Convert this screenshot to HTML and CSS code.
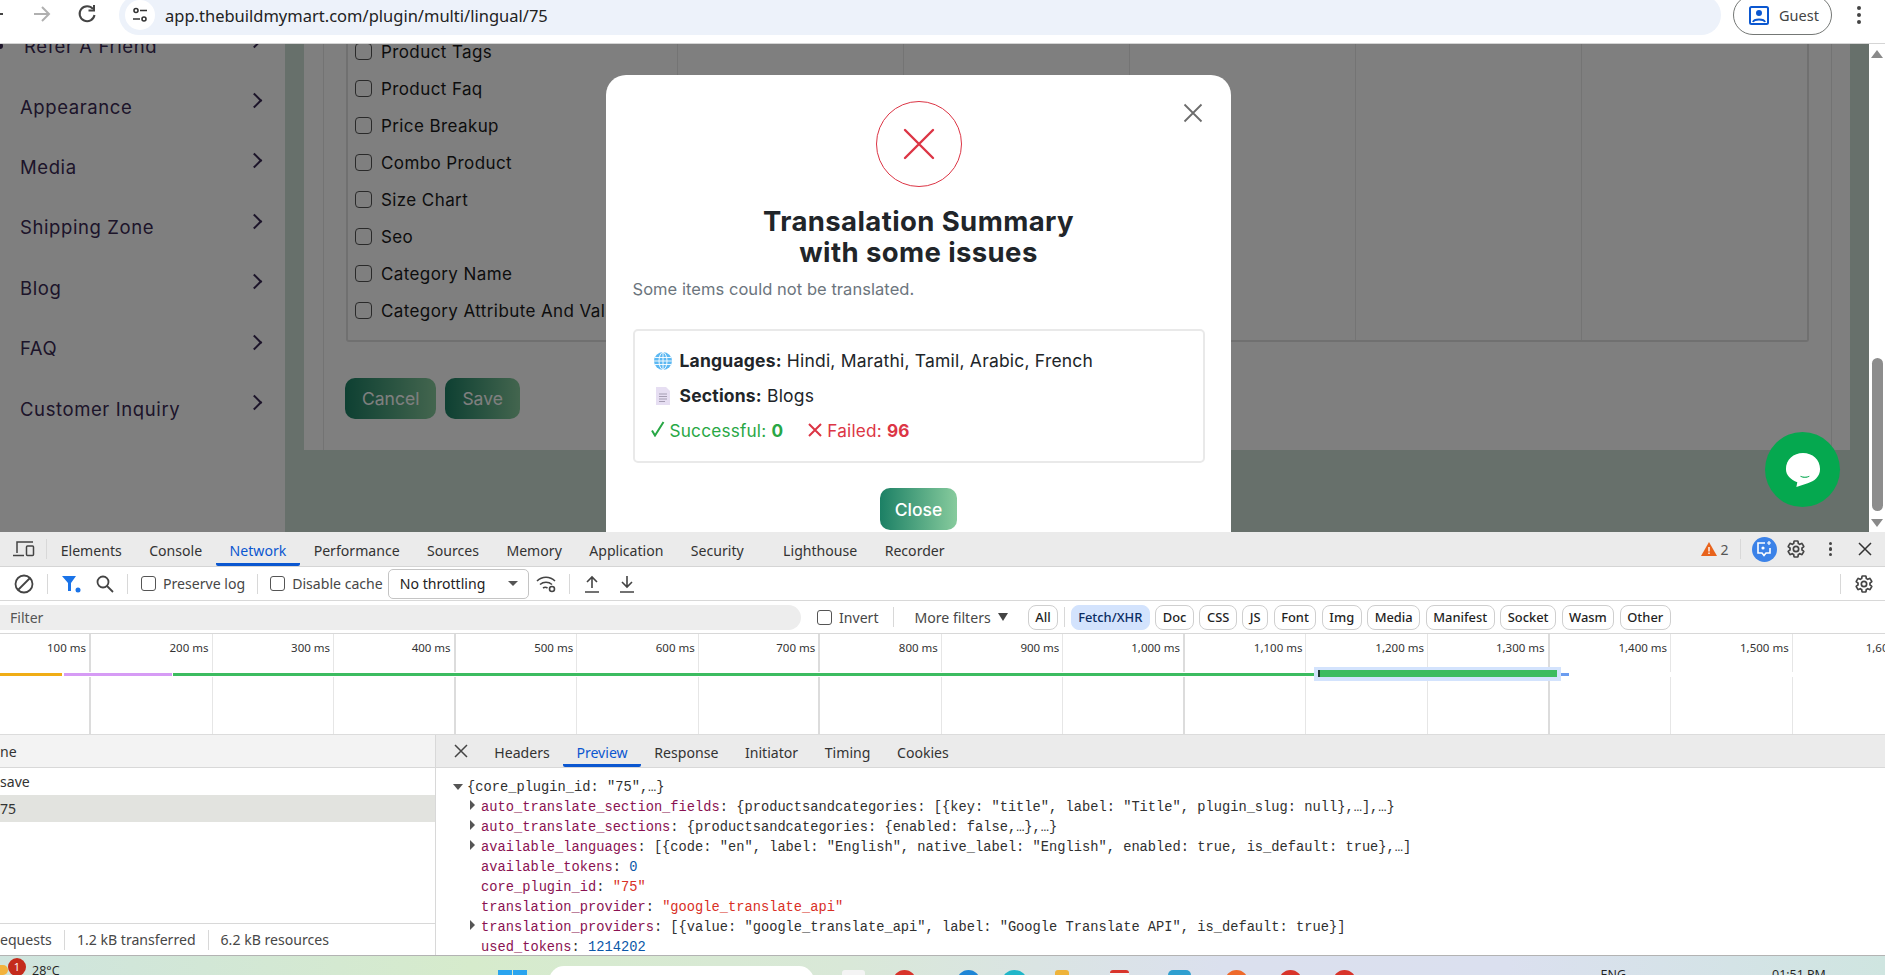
FILE: index.html
```html
<!DOCTYPE html>
<html lang="en">
<head>
  <meta charset="UTF-8">
  <title>Plugin - Multi Lingual</title>
  <link rel="stylesheet" href="styles.css">
</head>
<body>

  <!-- Browser toolbar -->
  <header class="browser-bar">
    <svg class="nav-icons" width="100" height="30" viewBox="0 0 100 30" fill="none" stroke-width="2">
      <path d="M0 14h3" stroke="#444"/>
      <path d="M34 14h14M42 7l7 7-7 7" stroke="#b0b0b0"/>
      <path d="M93 9a7.500 7.500 0 1 0 1.500 6" stroke="#444"/>
      <path d="M94 5v5.500h-5.500" stroke="#444"/>
    </svg>
    <div class="omnibox">
      <span class="site-chip">
        <svg width="18" height="18" viewBox="0 0 18 18" fill="none" stroke="#333" stroke-width="1.600">
          <circle cx="5" cy="4.500" r="2"/><path d="M9 4.500h7M2 13h7"/><circle cx="13" cy="13" r="2"/>
        </svg>
      </span>
      <span class="url">app.thebuildmymart.com/plugin/multi/lingual/75</span>
    </div>
    <div class="guest-pill">
      <svg width="20" height="19" viewBox="0 0 20 19" fill="none" stroke="#0b57d0" stroke-width="2">
        <rect x="1" y="1" width="18" height="17" rx="1.500"/><circle cx="10" cy="7" r="2" fill="#0b57d0"/><path d="M4 16c1-3.500 11-3.500 12 0"/>
      </svg>
      <span>Guest</span>
    </div>
    <div class="kebab kebab-browser"><i></i><i></i><i></i></div>
  </header>

  <!-- Application page behind the dialog -->
  <main class="page">
    <aside class="sidebar">
      <div class="side-item side-item-sub"><span class="side-dot"></span><span>Refer A Friend</span><span class="chevron"></span></div>
      <div class="side-item"><span>Appearance</span><span class="chevron"></span></div>
      <div class="side-item"><span>Media</span><span class="chevron"></span></div>
      <div class="side-item"><span>Shipping Zone</span><span class="chevron"></span></div>
      <div class="side-item"><span>Blog</span><span class="chevron"></span></div>
      <div class="side-item"><span>FAQ</span><span class="chevron"></span></div>
      <div class="side-item"><span>Customer Inquiry</span><span class="chevron"></span></div>
    </aside>

    <section class="content">
      <div class="panel">
        <div class="card">
          <div class="sections-table">
            <div class="table-col col-first">
              <label class="check-row"><span class="check"></span>Product Tags</label>
              <label class="check-row"><span class="check"></span>Product Faq</label>
              <label class="check-row"><span class="check"></span>Price Breakup</label>
              <label class="check-row"><span class="check"></span>Combo Product</label>
              <label class="check-row"><span class="check"></span>Size Chart</label>
              <label class="check-row"><span class="check"></span>Seo</label>
              <label class="check-row"><span class="check"></span>Category Name</label>
              <label class="check-row"><span class="check"></span>Category Attribute And Values</label>
            </div>
            <div class="table-col"></div>
            <div class="table-col"></div>
            <div class="table-col"></div>
            <div class="table-col"></div>
            <div class="table-col col-last"></div>
          </div>
          <div class="form-actions">
            <button class="grad-button">Cancel</button>
            <button class="grad-button">Save</button>
          </div>
        </div>
      </div>
    </section>

    <div class="scrollbar">
      <span class="scroll-arrow scroll-up"></span>
      <span class="scroll-thumb"></span>
      <span class="scroll-arrow scroll-down"></span>
    </div>

    <div class="backdrop"></div>

    <!-- Summary dialog -->
    <div class="modal">
      <svg class="modal-close" width="20" height="20" viewBox="0 0 20 20" stroke="#6c6c6c" stroke-width="1.800">
        <path d="M1.500 1.500l17 17M18.500 1.500l-17 17"/>
      </svg>
      <div class="modal-icon">
        <svg width="32" height="32" viewBox="0 0 32 32" stroke="#dc3545" stroke-width="2.400" stroke-linecap="round">
          <path d="M2 2l28 28M30 2L2 30"/>
        </svg>
      </div>
      <h2 class="modal-title">Transalation Summary<br>with some issues</h2>
      <p class="modal-text">Some items could not be translated.</p>
      <div class="summary-box">
        <div class="summary-row">
          <svg class="summary-icon" width="18" height="18" viewBox="0 0 18 18" fill="none" stroke="#fff" stroke-width=".9">
            <circle cx="9" cy="9" r="9" fill="#5cb8f2" stroke="none"/>
            <ellipse cx="9" cy="9" rx="4" ry="8.500"/><path d="M9 0v18M1 5.500h16M0 9h18M1 12.500h16"/>
          </svg>
          <span><b>Languages:</b> Hindi, Marathi, Tamil, Arabic, French</span>
        </div>
        <div class="summary-row">
          <svg class="summary-icon" width="18" height="18" viewBox="0 0 18 18" fill="none" stroke="#9d95aa" stroke-width=".9">
            <path d="M2 0h10l4 4v14H2z" fill="#e6def2" stroke="none"/>
            <path d="M5 7h8M5 9.500h8M5 12h8M5 14.500h6"/>
          </svg>
          <span><b>Sections:</b> Blogs</span>
        </div>
        <div class="summary-row stats-row">
          <span class="stat stat-ok"><svg width="14" height="16" viewBox="0 0 14 16" fill="none" stroke="#28a745" stroke-width="2"><path d="M1 9.500l3 5L12.500 1"/></svg> Successful: <b>0</b></span>
          <span class="stat stat-bad"><svg width="14" height="14" viewBox="0 0 14 14" fill="none" stroke="#dc3545" stroke-width="2"><path d="M1 1l12 12M13 1L1 13"/></svg> Failed: <b>96</b></span>
        </div>
      </div>
      <button class="grad-button close-button">Close</button>
    </div>

    <div class="chat-fab">
      <svg width="36" height="36" viewBox="0 0 38 38">
        <path d="M19 1c10 0 18 7 18 17 0 8-6 13-13 15l-12 4 1-5C6 29 1 25 1 18 1 8 9 1 19 1z" fill="#fff"/>
        <path d="M16 25c3 1.500 7 1.500 10 0-.5 3-9.500 3-10 0z" fill="#05a84f"/>
      </svg>
    </div>
  </main>

  <!-- DevTools -->
  <section class="devtools">
    <div class="dt-tabs">
      <svg class="dt-device" width="22" height="18" viewBox="0 0 22 18" fill="none" stroke="#444" stroke-width="1.500">
        <path d="M4 13V2h16M0 15.500h11"/><rect x="13.500" y="6" width="7" height="9.500" rx="1"/>
      </svg>
      <span class="dt-sep"></span>
      <span class="dt-tab">Elements</span>
      <span class="dt-tab">Console</span>
      <span class="dt-tab dt-tab-active">Network</span>
      <span class="dt-tab">Performance</span>
      <span class="dt-tab">Sources</span>
      <span class="dt-tab">Memory</span>
      <span class="dt-tab">Application</span>
      <span class="dt-tab">Security</span>
      <span class="dt-tab dt-tab-wide">Lighthouse</span>
      <span class="dt-tab">Recorder</span>
      <div class="dt-tabs-right">
        <svg width="16" height="14" viewBox="0 0 16 14"><path d="M8 0l8 14H0z" fill="#e8631c"/><path d="M8 5v4.500M8 10.500v1.500" stroke="#fff" stroke-width="1.400"/></svg>
        <span class="warn-count">2</span>
        <span class="dt-sep dt-sep-warn"></span>
        <span class="ai-badge">
          <svg width="16" height="16" viewBox="0 0 16 16" fill="none" stroke="#fff" stroke-width="1.600">
            <path d="M9 2H2v10h4l2 2.500 2-2.500h4V7"/><path d="M13 0v4M11 2h4" stroke-width="1.200"/><circle cx="7" cy="7" r=".8" fill="#fff"/>
          </svg>
        </span>
        <svg class="gear" width="20" height="20" viewBox="0 0 24 24" fill="none" stroke="#444" stroke-width="2">
          <path d="M19.140 12.940c.04-.3.06-.61.06-.94 0-.32-.02-.64-.07-.94l2.030-1.580c.18-.14.23-.41.12-.61l-1.920-3.320c-.12-.22-.37-.29-.59-.22l-2.390.96c-.5-.38-1.030-.7-1.620-.94l-.36-2.540c-.04-.24-.24-.41-.48-.41h-3.840c-.24 0-.43.17-.47.41l-.36 2.540c-.59.24-1.130.57-1.620.94l-2.390-.96c-.22-.08-.47 0-.59.22L2.740 8.870c-.12.21-.08.47.12.61l2.030 1.580c-.05.3-.09.63-.09.94s.02.64.07.94l-2.030 1.580c-.18.14-.23.41-.12.61l1.920 3.320c.12.22.37.29.59.22l2.390-.96c.5.38 1.030.7 1.620.94l.36 2.540c.05.24.24.41.48.41h3.840c.24 0 .44-.17.47-.41l.36-2.540c.59-.24 1.130-.56 1.620-.94l2.390.96c.22.08.47 0 .59-.22l1.920-3.320c.12-.22.07-.47-.12-.61l-2.010-1.580z"/>
          <circle cx="12" cy="12" r="3.200"/>
        </svg>
        <div class="kebab kebab-dt"><i></i><i></i><i></i></div>
        <svg class="dt-close" width="14" height="14" viewBox="0 0 14 14" stroke="#333" stroke-width="1.500"><path d="M1 1l12 12M13 1L1 13"/></svg>
      </div>
    </div>

    <div class="dt-toolbar">
      <svg class="tool-block" width="20" height="20" viewBox="0 0 20 20" fill="none" stroke="#444" stroke-width="1.800"><circle cx="10" cy="10" r="8.500"/><path d="M4 16L16 4"/></svg>
      <span class="dt-sep tool-sep-a"></span>
      <svg class="tool-filter" width="19" height="18" viewBox="0 0 19 18"><path d="M0 1h14L9 8v8H6V8z" fill="#1a73e8"/><circle cx="16" cy="15" r="2.500" fill="#1a73e8"/></svg>
      <svg class="tool-search" width="18" height="18" viewBox="0 0 18 18" fill="none" stroke="#444" stroke-width="1.800"><circle cx="7" cy="7" r="5.500"/><path d="M11 11l6 6"/></svg>
      <span class="dt-sep tool-sep-b"></span>
      <label class="dt-check preserve"><span class="dt-box"></span>Preserve log</label>
      <span class="dt-sep tool-sep-c"></span>
      <label class="dt-check disable"><span class="dt-box"></span>Disable cache</label>
      <div class="throttle">No throttling<span class="caret"></span></div>
      <svg class="tool-wifi" width="21" height="18" viewBox="0 0 21 18" fill="none" stroke="#444" stroke-width="1.600">
        <path d="M1 6c5-5 13-5 18 0M4 9.500c3.500-3 8.500-3 12 0M7 13c1.500-1 3-1 4.500 0"/><circle cx="16" cy="14" r="2.500"/>
      </svg>
      <span class="dt-sep tool-sep-d"></span>
      <svg class="tool-up" width="16" height="18" viewBox="0 0 16 18" fill="none" stroke="#444" stroke-width="1.600"><path d="M8 13V2M3 7l5-5 5 5M1 17h14"/></svg>
      <svg class="tool-down" width="16" height="18" viewBox="0 0 16 18" fill="none" stroke="#444" stroke-width="1.600"><path d="M8 1v11M3 7l5 5 5-5M1 17h14"/></svg>
      <div class="toolbar-right">
        <span class="dt-sep"></span>
        <svg class="gear" width="20" height="20" viewBox="0 0 24 24" fill="none" stroke="#444" stroke-width="2">
          <path d="M19.140 12.940c.04-.3.06-.61.06-.94 0-.32-.02-.64-.07-.94l2.030-1.580c.18-.14.23-.41.12-.61l-1.920-3.320c-.12-.22-.37-.29-.59-.22l-2.390.96c-.5-.38-1.030-.7-1.620-.94l-.36-2.540c-.04-.24-.24-.41-.48-.41h-3.840c-.24 0-.43.17-.47.41l-.36 2.540c-.59.24-1.130.57-1.620.94l-2.390-.96c-.22-.08-.47 0-.59.22L2.740 8.870c-.12.21-.08.47.12.61l2.030 1.580c-.05.3-.09.63-.09.94s.02.64.07.94l-2.030 1.580c-.18.14-.23.41-.12.61l1.920 3.320c.12.22.37.29.59.22l2.390-.96c.5.38 1.030.7 1.620.94l.36 2.540c.05.24.24.41.48.41h3.840c.24 0 .44-.17.47-.41l.36-2.540c.59-.24 1.130-.56 1.620-.94l2.390.96c.22.08.47 0 .59-.22l1.920-3.320c.12-.22.07-.47-.12-.61l-2.010-1.580z"/>
          <circle cx="12" cy="12" r="3.200"/>
        </svg>
      </div>
    </div>

    <div class="dt-filter">
      <div class="filter-input">Filter</div>
      <label class="dt-check invert"><span class="dt-box"></span>Invert</label>
      <span class="dt-sep filter-sep"></span>
      <span class="more-filters">More filters<span class="more-caret"></span></span>
      <span class="chip chip-all">All</span>
      <span class="dt-sep chip-sep"></span>
      <span class="chip chip-on">Fetch/XHR</span>
      <span class="chip">Doc</span>
      <span class="chip">CSS</span>
      <span class="chip">JS</span>
      <span class="chip">Font</span>
      <span class="chip">Img</span>
      <span class="chip">Media</span>
      <span class="chip">Manifest</span>
      <span class="chip">Socket</span>
      <span class="chip">Wasm</span>
      <span class="chip">Other</span>
    </div>

    <div class="timeline">
      <div class="tick tick-first">100 ms</div>
      <div class="tick">200 ms</div>
      <div class="tick">300 ms</div>
      <div class="tick">400 ms</div>
      <div class="tick">500 ms</div>
      <div class="tick">600 ms</div>
      <div class="tick">700 ms</div>
      <div class="tick">800 ms</div>
      <div class="tick">900 ms</div>
      <div class="tick">1,000 ms</div>
      <div class="tick">1,100 ms</div>
      <div class="tick">1,200 ms</div>
      <div class="tick">1,300 ms</div>
      <div class="tick">1,400 ms</div>
      <div class="tick">1,500 ms</div>
      <div class="tick tick-last">1,600 ms</div>
      <div class="bar-strip">
        <span class="bar bar-yellow"></span>
        <span class="bar bar-purple"></span>
        <span class="bar bar-green"></span>
        <span class="bar-selected"><span class="bar-dark"></span></span>
        <span class="bar bar-blue"></span>
      </div>
    </div>

    <div class="dt-lower">
      <div class="req-list">
        <div class="req-head">ne</div>
        <div class="req-row">save</div>
        <div class="req-row req-row-on">75</div>
        <div class="req-spacer"></div>
        <div class="req-foot">
          <span>equests</span><span class="dt-sep"></span>
          <span>1.2 kB transferred</span><span class="dt-sep"></span>
          <span>6.2 kB resources</span>
        </div>
      </div>
      <div class="detail">
        <div class="detail-tabs">
          <svg class="detail-close" width="14" height="14" viewBox="0 0 14 14" stroke="#444" stroke-width="1.500"><path d="M1 1l12 12M13 1L1 13"/></svg>
          <span class="dt-tab">Headers</span>
          <span class="dt-tab dt-tab-active">Preview</span>
          <span class="dt-tab">Response</span>
          <span class="dt-tab">Initiator</span>
          <span class="dt-tab">Timing</span>
          <span class="dt-tab">Cookies</span>
        </div>
        <div class="json">
          <div class="json-root"><span class="tri tri-open"></span>{core_plugin_id: "75",…}</div>
          <div class="json-line"><span class="tri"></span><span class="k">auto_translate_section_fields</span>: {productsandcategories: [{key: "title", label: "Title", plugin_slug: null},…],…}</div>
          <div class="json-line"><span class="tri"></span><span class="k">auto_translate_sections</span>: {productsandcategories: {enabled: false,…},…}</div>
          <div class="json-line"><span class="tri"></span><span class="k">available_languages</span>: [{code: "en", label: "English", native_label: "English", enabled: true, is_default: true},…]</div>
          <div class="json-line"><span class="k">available_tokens</span>: <span class="n">0</span></div>
          <div class="json-line"><span class="k">core_plugin_id</span>: <span class="s">"75"</span></div>
          <div class="json-line"><span class="k">translation_provider</span>: <span class="s">"google_translate_api"</span></div>
          <div class="json-line"><span class="tri"></span><span class="k">translation_providers</span>: [{value: "google_translate_api", label: "Google Translate API", is_default: true}]</div>
          <div class="json-line"><span class="k">used_tokens</span>: <span class="n">1214202</span></div>
        </div>
      </div>
    </div>
  </section>

  <!-- Windows taskbar, cut off by the screenshot -->
  <footer class="taskbar">
    <span class="weather-sun"></span>
    <span class="weather-badge">1</span>
    <span class="weather-temp">28°C</span>
    <span class="win-logo"><i></i><i></i></span>
    <span class="task-search"></span>
    <span class="task-app app-white"></span>
    <span class="task-app app-red"></span>
    <span class="task-app app-blue"></span>
    <span class="task-app app-teal"></span>
    <span class="task-app app-yellow"></span>
    <span class="task-app app-calendar"></span>
    <span class="task-app app-dots"></span>
    <span class="task-app app-orange"></span>
    <span class="task-app app-red2"></span>
    <span class="task-app app-red3"></span>
    <span class="tray-lang">ENG</span>
    <span class="tray-time">01:51 PM</span>
  </footer>

</body>
</html>
```

FILE: styles.css
```css
/* General page */
* {
  box-sizing: border-box;
}

body {
  margin: 0;
  height: 975px;
  width: 1885px;
  overflow: hidden;
  display: flex;
  flex-direction: column;
  font-family: "Noto Sans", sans-serif;
  background-color: #fff;
}

/* Browser toolbar */
.browser-bar {
  height: 44px;
  flex: none;
  display: flex;
  align-items: flex-start;
  background-color: #fff;
  border-bottom: 1px solid #d5d5d5;
}

.nav-icons {
  flex: none;
  width: 100px;
}

.omnibox {
  width: 1602px;
  height: 40px;
  margin: -5px 0 0 19px;
  padding-left: 6px;
  display: flex;
  align-items: center;
  gap: 10px;
  background-color: #edf2fa;
  border-radius: 20px;
}

.site-chip {
  width: 30px;
  height: 30px;
  display: flex;
  align-items: center;
  justify-content: center;
  background-color: #fff;
  border-radius: 50%;
}

.url {
  font-size: 16.500px;
  color: #222;
}

.guest-pill {
  width: 99px;
  height: 40px;
  margin: -5px 0 0 12px;
  padding: 0 0 0 15px;
  display: flex;
  align-items: center;
  gap: 10px;
  font-size: 14.500px;
  color: #444;
  border: 1px solid #747775;
  border-radius: 20px;
}

.kebab {
  display: flex;
  flex-direction: column;
  gap: 3px;
}

.kebab i {
  width: 4px;
  height: 4px;
  background-color: #444;
  border-radius: 50%;
}

.kebab-browser {
  margin: 6px 0 0 25px;
}

/* Application page */
.page {
  position: relative;
  height: 488px;
  flex: none;
  display: flex;
  overflow: hidden;
  background-color: #cee0d6;
  font-family: Inter, sans-serif;
}

.sidebar {
  width: 285px;
  flex: none;
  margin-top: -28px;
  background-color: #fff;
}

.side-item {
  height: 60.400px;
  padding: 0 23px 0 20px;
  display: flex;
  align-items: center;
  justify-content: space-between;
  font-size: 18.500px;
  letter-spacing: .6px;
  color: #3a2a55;
}

.side-item-sub {
  padding-left: 0;
  justify-content: flex-start;
}

.side-dot {
  width: 3px;
  height: 6px;
  margin-right: 21px;
  background-color: #3a2a55;
  border-radius: 0 3px 3px 0;
}

.side-item-sub .chevron {
  margin-left: auto;
}

.chevron {
  width: 11px;
  height: 11px;
  margin: 0 2px 12px 0;
  border-top: 2px solid #3a2a55;
  border-right: 2px solid #3a2a55;
  transform: rotate(45deg);
}

.content {
  flex: 1;
  padding: 0 19px;
}

.panel {
  height: 406px;
  padding: 0 18px 0 19px;
  background-color: #fff;
}

.card {
  height: 100%;
  padding-left: 22px;
  border-left: 1px solid #e6e6e6;
  border-right: 1px solid #e6e6e6;
}

.sections-table {
  width: 1463px;
  height: 298px;
  display: flex;
  border-right: 2px solid #e0e0e0;
  border-bottom: 2px solid #e0e0e0;
  border-left: 2px solid #e0e0e0;
  border-radius: 0 0 3px 3px;
}

.table-col {
  width: 226px;
  border-right: 1px solid #e8e8e8;
}

.col-first {
  width: 330px;
  padding: 0 0 0 7px;
  white-space: nowrap;
  overflow: hidden;
}

.col-last {
  flex: 1;
  border-right: none;
}

.check-row {
  height: 37px;
  display: flex;
  align-items: center;
  gap: 9px;
  font-size: 17px;
  letter-spacing: .4px;
  color: #1a1a1a;
}

.check-row:first-child {
  margin-top: -11px;
}

.check {
  width: 17px;
  height: 17px;
  flex: none;
  background-color: #fff;
  border: 1px solid #555;
  border-radius: 4px;
}

.form-actions {
  margin: 36px 0 0 -1px;
  display: flex;
  gap: 9px;
}

.grad-button {
  height: 41px;
  padding: 0 17px;
  border: none;
  border-radius: 10px;
  font-family: Inter, sans-serif;
  font-size: 17.500px;
  color: #fff;
  background: linear-gradient(90deg, #1c8065, #87cb9d);
}

/* Scrollbar */
.scrollbar {
  width: 16px;
  flex: none;
  display: flex;
  flex-direction: column;
  align-items: center;
  padding-top: 6px;
  background-color: #fff;
}

.scroll-arrow {
  width: 0;
  height: 0;
  border-left: 6px solid transparent;
  border-right: 6px solid transparent;
}

.scroll-up {
  border-bottom: 8px solid #8a8a8a;
}

.scroll-down {
  margin-top: 8px;
  border-top: 8px solid #8a8a8a;
}

.scroll-thumb {
  width: 11px;
  height: 153px;
  margin-top: 300px;
  background-color: #8d8d8d;
  border-radius: 6px;
}

/* Dialog */
.backdrop {
  position: absolute;
  left: 0;
  right: 16px;
  top: 0;
  bottom: 0;
  background-color: rgba(0, 0, 0, .5);
}

.modal {
  position: absolute;
  left: 606px;
  top: 31px;
  width: 625px;
  height: 520px;
  padding: 26px 26.500px 0;
  display: flex;
  flex-direction: column;
  align-items: center;
  background-color: #fff;
  border-radius: 20px;
}

.modal-close {
  position: absolute;
  top: 28px;
  right: 28px;
}

.modal-icon {
  width: 86px;
  height: 86px;
  flex: none;
  display: flex;
  align-items: center;
  justify-content: center;
  border: 1px solid #dc3545;
  border-radius: 50%;
}

.modal-title {
  margin: 19px 0 0;
  font-size: 27.500px;
  line-height: 31px;
  font-weight: 700;
  letter-spacing: .4px;
  text-align: center;
  color: #212529;
}

.modal-text {
  align-self: flex-start;
  margin: 9px 0 0;
  font-size: 16.500px;
  line-height: 24px;
  letter-spacing: .05px;
  color: #6c757d;
}

.summary-box {
  width: 572px;
  height: 134px;
  margin-top: 28px;
  padding: 12px 19px 0;
  align-self: flex-start;
  border: 2px solid #e9e9e9;
  border-radius: 5px;
}

.summary-row {
  height: 35px;
  display: flex;
  align-items: center;
  gap: 8px;
  font-size: 17.500px;
  letter-spacing: .2px;
  color: #212529;
}

.stats-row {
  gap: 25px;
  margin-left: -3px;
  font-size: 17.200px;
}

.stat-ok {
  color: #28a745;
}

.stat-bad {
  color: #dc3545;
}

.close-button {
  height: 42px;
  margin-top: 25px;
  padding: 0 15px;
  flex: none;
  font-weight: 500;
}

.chat-fab {
  position: absolute;
  left: 1765px;
  top: 388px;
  width: 75px;
  height: 75px;
  display: flex;
  align-items: center;
  justify-content: center;
  background-color: #05a84f;
  border-radius: 50%;
}

/* DevTools */
.devtools {
  height: 423px;
  flex: none;
  display: flex;
  flex-direction: column;
  font-size: 14.100px;
  color: #333;
  background-color: #fff;
}

.dt-sep {
  width: 1px;
  height: 20px;
  flex: none;
  background-color: #d8d8d8;
}

.dt-tabs {
  height: 35px;
  flex: none;
  display: flex;
  align-items: center;
  background-color: #ebebeb;
  border-bottom: 1px solid #d5d5d5;
}

.dt-device {
  margin: 0 11px 0 13px;
}

.dt-tab {
  height: 100%;
  padding: 3px 13.700px 0;
  display: flex;
  align-items: center;
  white-space: nowrap;
  border-bottom: 3px solid transparent;
  border-top: 3px solid transparent;
}

.dt-tab-active {
  color: #0b57d0;
  border-bottom-color: #0b57d0;
  border-radius: 2px;
}

.dt-tab-wide {
  margin-left: 12px;
}

.dt-tabs-right {
  margin-left: auto;
  padding-right: 13px;
  display: flex;
  align-items: center;
}

.warn-count {
  margin-left: 3px;
  font-size: 14px;
  color: #555;
}

.dt-sep-warn {
  margin: 0 11px;
}

.ai-badge {
  width: 25px;
  height: 25px;
  display: flex;
  align-items: center;
  justify-content: center;
  background-color: #3b82e8;
  border-radius: 50%;
}

.dt-tabs-right .gear {
  margin-left: 9px;
}

.kebab-dt {
  margin: 0 26px 0 23px;
  gap: 2px;
}

.kebab-dt i {
  width: 3.500px;
  height: 3.500px;
}

.dt-toolbar {
  height: 34px;
  flex: none;
  display: flex;
  align-items: center;
  border-bottom: 1px solid #d8d8d8;
}

.tool-block {
  margin-left: 14px;
}

.tool-sep-a {
  margin-left: 13px;
}

.tool-filter {
  margin-left: 14px;
}

.tool-search {
  margin-left: 15px;
}

.tool-sep-b {
  margin-left: 13px;
}

.dt-check {
  display: flex;
  align-items: center;
  gap: 7px;
  white-space: nowrap;
  color: #474747;
}

.dt-box {
  width: 15px;
  height: 15px;
  flex: none;
  border: 1px solid #555;
  border-radius: 3px;
}

.preserve {
  margin-left: 13px;
}

.tool-sep-c {
  margin-left: 12px;
}

.disable {
  margin-left: 12px;
}

.throttle {
  width: 141px;
  height: 30px;
  margin-left: 5px;
  padding: 0 10px 0 11px;
  display: flex;
  align-items: center;
  justify-content: space-between;
  color: #222;
  border: 1px solid #c4c4c4;
  border-radius: 5px;
}

.caret {
  width: 0;
  height: 0;
  border-left: 5px solid transparent;
  border-right: 5px solid transparent;
  border-top: 5px solid #555;
}

.tool-wifi {
  margin-left: 7px;
}

.tool-sep-d {
  margin-left: 12px;
}

.tool-up {
  margin-left: 14px;
}

.tool-down {
  margin-left: 19px;
}

.toolbar-right {
  margin-left: auto;
  padding-right: 11px;
  display: flex;
  align-items: center;
  gap: 13px;
}

.dt-filter {
  height: 33px;
  flex: none;
  display: flex;
  align-items: center;
  border-bottom: 1px solid #d8d8d8;
}

.filter-input {
  width: 801px;
  height: 25px;
  padding-left: 10px;
  display: flex;
  align-items: center;
  color: #555;
  background-color: #ededed;
  border-radius: 0 13px 13px 0;
}

.invert {
  margin-left: 16px;
}

.filter-sep {
  margin-left: 14px;
}

.more-filters {
  margin-left: 21px;
  display: flex;
  align-items: center;
  gap: 7px;
  white-space: nowrap;
  color: #474747;
}

.more-caret {
  width: 0;
  height: 0;
  border-left: 5.500px solid transparent;
  border-right: 5.500px solid transparent;
  border-top: 8px solid #444;
}

.chip {
  height: 25px;
  margin-left: 5.500px;
  padding: 0 6.500px;
  display: flex;
  align-items: center;
  font-size: 12.900px;
  font-weight: 500;
  color: #1f1f1f;
  border: 1px solid #cfcfcf;
  border-radius: 8px;
}

.chip-all {
  margin-left: 20px;
}

.chip-sep {
  margin-left: 6px;
}

.chip-on {
  color: #0a2c63;
  background-color: #d3e3fd;
  border-color: #d3e3fd;
}

.timeline {
  position: relative;
  height: 101px;
  flex: none;
  display: flex;
  overflow: hidden;
  border-bottom: 1px solid #dcdcdc;
}

.tick {
  width: 121.550px;
  flex: none;
  padding: 6px 3px 0 0;
  font-size: 11.500px;
  text-align: right;
  white-space: nowrap;
  color: #333;
  border-right: 1px solid #e6e6e6;
}

.tick:nth-child(3n+1) {
  border-right: 2px solid #dcdcdc;
}

.tick-first {
  width: 91px;
}

.tick-last {
  border-right: none;
  text-align: left;
  padding-left: 73px;
}

.bar-strip {
  position: absolute;
  left: 0;
  right: 0;
  top: 38px;
  height: 5px;
  background-color: #fff;
}

.bar {
  position: absolute;
  top: 1px;
  height: 3px;
}

.bar-yellow {
  left: 0;
  width: 62px;
  background-color: #f0ad15;
}

.bar-purple {
  left: 64px;
  width: 108px;
  background-color: #d69bf5;
}

.bar-green {
  left: 173px;
  width: 1142px;
  background-color: #3cbc60;
}

.bar-blue {
  left: 1561px;
  width: 8px;
  background-color: #6a9cf0;
}

.bar-selected {
  position: absolute;
  left: 1314px;
  top: -5px;
  width: 247px;
  height: 14px;
  padding: 3px 4px;
  background-color: #d3e3fd;
}

.bar-dark {
  display: block;
  height: 7px;
  background-color: #3cbc60;
  border-left: 2px solid #1f3a34;
}

.dt-lower {
  flex: 1;
  display: flex;
  min-height: 0;
}

.req-list {
  width: 436px;
  flex: none;
  display: flex;
  flex-direction: column;
  border-right: 1px solid #d8d8d8;
}

.req-head {
  height: 33px;
  display: flex;
  align-items: center;
  background-color: #f3f3f3;
  border-bottom: 1px solid #d8d8d8;
}

.req-row {
  height: 27px;
  display: flex;
  align-items: center;
}

.req-row-on {
  background-color: #e2e3df;
}

.req-spacer {
  flex: 1;
}

.req-foot {
  height: 32px;
  display: flex;
  align-items: center;
  gap: 12px;
  color: #474747;
  border-top: 1px solid #d8d8d8;
}

.detail {
  flex: 1;
  min-width: 0;
}

.detail-tabs {
  height: 33px;
  display: flex;
  align-items: center;
  background-color: #ebebeb;
  border-bottom: 1px solid #d8d8d8;
}

.detail-close {
  margin: 0 13px 0 18px;
}

.detail-tabs .dt-tab {
  padding: 3px 13.300px 0;
}

.json {
  padding: 10px 0 0 45px;
  font-family: "Liberation Mono", monospace;
  font-size: 13.730px;
  line-height: 20px;
  color: #303030;
}

.json-root,
.json-line {
  height: 20px;
  white-space: pre;
}

.json-root {
  margin-left: -14px;
}

.tri {
  display: inline-block;
  width: 0;
  height: 0;
  margin: 0 6px 1px -11px;
  border-top: 5px solid transparent;
  border-bottom: 5px solid transparent;
  border-left: 5px solid #555;
}

.tri-open {
  margin: 0 4px 1px -14px;
  border-left: 5px solid transparent;
  border-right: 5px solid transparent;
  border-top: 6px solid #555;
  border-bottom: none;
}

.k {
  color: #8a1252;
}

.s {
  color: #d93025;
}

.n {
  color: #0b57a8;
}

/* Taskbar */
.taskbar {
  height: 20px;
  flex: none;
  display: flex;
  align-items: flex-start;
  overflow: hidden;
  font-family: "Open Sans", sans-serif;
  font-size: 12.500px;
  color: #222;
  background: linear-gradient(90deg, #cfe4de 0%, #d6ebcc 25%, #d9e8d8 45%, #dbe0ee 65%, #dbe0ef 80%, #cfe5e0 100%);
  border-top: 1px solid #b3b3b3;
}

.weather-sun {
  width: 8px;
  height: 10px;
  margin-top: 9px;
  flex: none;
  background-color: #f2b33d;
  border-radius: 0 5px 5px 0;
}

.weather-badge {
  width: 18px;
  height: 18px;
  margin: 2px 0 0 0;
  flex: none;
  font-size: 11px;
  line-height: 18px;
  text-align: center;
  color: #fff;
  background-color: #c42b1c;
  border-radius: 50%;
}

.weather-temp {
  margin: 6px 0 0 6px;
}

.win-logo {
  width: 29px;
  height: 20px;
  margin: 14px 0 0 438px;
  display: flex;
  gap: 1px;
}

.win-logo i {
  flex: 1;
  background-color: #2aa4ef;
}

.task-search {
  width: 265px;
  height: 30px;
  margin: 10px 0 0 22px;
  background-color: #fff;
  border-radius: 15px;
}

.task-app {
  width: 23px;
  height: 23px;
  margin-top: 14px;
  border-radius: 50%;
}

.app-white {
  margin-left: 28px;
  background-color: #f4f4f4;
  border-radius: 3px;
}

.app-red {
  margin-left: 28px;
  background-color: #d8342b;
}

.app-blue {
  margin-left: 41px;
  background-color: #1f86d6;
}

.app-teal {
  margin-left: 22px;
  width: 25px;
  background-color: #21b6c9;
}

.app-yellow {
  margin-left: 28px;
  width: 14px;
  background-color: #eeb33a;
  border-radius: 3px;
}

.app-calendar {
  margin-left: 41px;
  width: 19px;
  background-color: #f5f5f5;
  border-top: 3px solid #d8342b;
  border-radius: 3px;
}

.app-dots {
  margin-left: 39px;
  background-color: #2f9fd0;
  border-radius: 5px;
}

.app-orange {
  margin-left: 34px;
  background-color: #ee6a2c;
}

.app-red2 {
  margin-left: 31px;
  background-color: #d8342b;
}

.app-red3 {
  margin-left: 31px;
  background-color: #d8342b;
}

.tray-lang {
  margin: 10px 0 0 245px;
}

.tray-time {
  margin: 10px 0 0 146px;
}
```
